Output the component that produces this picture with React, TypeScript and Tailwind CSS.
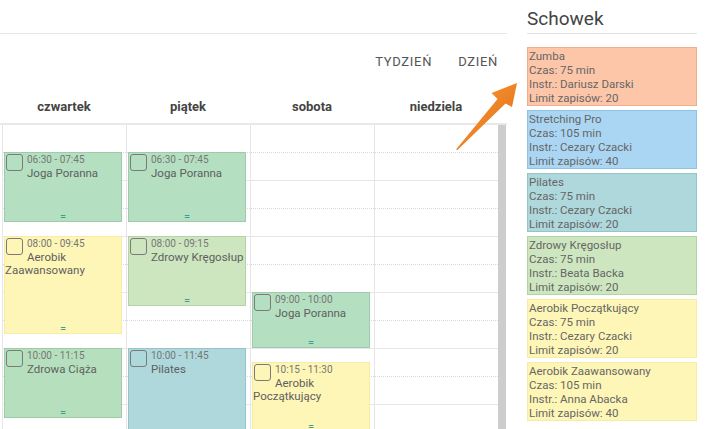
import React from "react";

type Ev = {
  start: number;
  end: number;
  time: string;
  title: string;
  bg: string;
  border: string;
};

const toMin = (h: number, m: number) => h * 60 + m;

const days: { name: string; events: Ev[] }[] = [
  {
    name: "czwartek",
    events: [
      { start: toMin(6, 30), end: toMin(7, 45), time: "06:30 - 07:45", title: "Joga Poranna", bg: "#b4dfc1", border: "#9dcbab" },
      { start: toMin(8, 0), end: toMin(9, 45), time: "08:00 - 09:45", title: "Aerobik Zaawansowany", bg: "#fef6b6", border: "#f6eca6" },
      { start: toMin(10, 0), end: toMin(11, 15), time: "10:00 - 11:15", title: "Zdrowa Ciąża", bg: "#b6e0bd", border: "#9ecca6" },
    ],
  },
  {
    name: "piątek",
    events: [
      { start: toMin(6, 30), end: toMin(7, 45), time: "06:30 - 07:45", title: "Joga Poranna", bg: "#b4dfc1", border: "#9dcbab" },
      { start: toMin(8, 0), end: toMin(9, 15), time: "08:00 - 09:15", title: "Zdrowy Kręgosłup", bg: "#cde6bf", border: "#b5d4a6" },
      { start: toMin(10, 0), end: toMin(11, 45), time: "10:00 - 11:45", title: "Pilates", bg: "#aed8dc", border: "#95c4c9" },
    ],
  },
  {
    name: "sobota",
    events: [
      { start: toMin(9, 0), end: toMin(10, 0), time: "09:00 - 10:00", title: "Joga Poranna", bg: "#b4dfc1", border: "#9dcbab" },
      { start: toMin(10, 15), end: toMin(11, 30), time: "10:15 - 11:30", title: "Aerobik Początkujący", bg: "#fef6b6", border: "#f6eca6" },
    ],
  },
  { name: "niedziela", events: [] },
];

const clipboard = [
  { title: "Zumba", time: "75 min", instr: "Dariusz Darski", limit: 20, bg: "#fdc6a9", border: "#f2ad8d" },
  { title: "Stretching Pro", time: "105 min", instr: "Cezary Czacki", limit: 40, bg: "#abd6f3", border: "#8fc3e6" },
  { title: "Pilates", time: "75 min", instr: "Cezary Czacki", limit: 20, bg: "#aed8dc", border: "#95c4c9" },
  { title: "Zdrowy Kręgosłup", time: "75 min", instr: "Beata Backa", limit: 20, bg: "#cde6bf", border: "#b5d4a6" },
  { title: "Aerobik Początkujący", time: "75 min", instr: "Cezary Czacki", limit: 20, bg: "#fef6b6", border: "#f6eca6" },
  { title: "Aerobik Zaawansowany", time: "105 min", instr: "Anna Abacka", limit: 40, bg: "#fef6b6", border: "#f6eca6" },
];

const slots = Array.from({ length: 12 }, (_, i) => i);

function EventCard({ ev }: { ev: Ev }) {
  const top = ((ev.start - 360) * 14) / 15 - 1;
  const height = ((ev.end - ev.start) * 14) / 15;
  return (
    <div
      className="absolute left-[1px] w-[118px] border overflow-hidden"
      style={{ top, height, backgroundColor: ev.bg, borderColor: ev.border }}
    >
      <div className="float-left ml-[1px] mt-[1px] mr-[4px] w-[17px] h-[17px] rounded-[3px] border border-[#7a7a7a]" />
      <div className="text-[10px] leading-[11px] text-[#777] pt-[1px]">{ev.time}</div>
      <div className="text-[11.5px] leading-[13px] text-[#606060] mt-[2px]">{ev.title}</div>
      <div className="absolute bottom-[-1px] left-0 right-0 text-center text-[11px] leading-[10px] text-[#3f9d92]">=</div>
    </div>
  );
}

export default function App() {
  return (
    <div className="relative flex w-[709px] h-[429px] overflow-hidden bg-white font-['Roboto','Liberation_Sans',sans-serif]">
      <div className="w-[507px] flex flex-col shrink-0">
        <div className="h-[34px] border-b border-[#e6e6e6] shrink-0" />
        <div className="h-[56px] flex items-center justify-end gap-[26px] pr-[9px] shrink-0 text-[13px] text-[#555] tracking-[0.7px]">
          <span>TYDZIEŃ</span>
          <span>DZIEŃ</span>
        </div>
        <div className="h-[35px] border-b-2 border-[#e8e8e8] flex pl-[2px] shrink-0">
          {days.map((d) => (
            <div key={d.name} className="w-[124px] flex items-center justify-center text-[13px] font-bold text-[#444]">
              {d.name}
            </div>
          ))}
        </div>
        <div className="flex flex-1 pl-[2px] overflow-hidden">
          {days.map((d) => (
            <div key={d.name} className="relative w-[124px] border-l border-[#e6e6e6]">
              {slots.map((i) => (
                <div
                  key={i}
                  className={
                    i % 2 === 0
                      ? "h-[28px] border-b border-dotted border-[#d9d9d9]"
                      : "h-[28px] border-b border-[#e6e6e6]"
                  }
                />
              ))}
              {d.events.map((ev) => (
                <EventCard key={ev.time + ev.title} ev={ev} />
              ))}
            </div>
          ))}
          <div className="w-[8px] bg-[#cdcdcd]" />
        </div>
      </div>

      <div className="ml-[20px] w-[170px] flex flex-col">
        <div className="h-[34px] border-b border-[#e3e3e3] pt-[8px] text-[19px] leading-[22px] text-[#444]">
          Schowek
        </div>
        <div className="mt-[13px] flex flex-col gap-[4px]">
          {clipboard.map((c) => (
            <div
              key={c.title}
              className="h-[59px] border px-[1px] pt-[1px] text-[11.5px] leading-[14px] text-[#666]"
              style={{ backgroundColor: c.bg, borderColor: c.border }}
            >
              <div>{c.title}</div>
              <div>Czas: {c.time}</div>
              <div>Instr.: {c.instr}</div>
              <div>Limit zapisów: {c.limit}</div>
            </div>
          ))}
        </div>
      </div>

      <svg className="absolute left-0 top-0 pointer-events-none" width="709" height="429">
        <defs>
          <linearGradient id="ag" x1="0" y1="0" x2="1" y2="1">
            <stop offset="0" stopColor="#f9a03c" />
            <stop offset="1" stopColor="#e2680f" />
          </linearGradient>
        </defs>
        <polygon
          points="456,149.5 497.5,99 491.5,93 517,83 512,107 505.5,103.5 457.5,150"
          fill="url(#ag)"
        />
      </svg>
    </div>
  );
}
